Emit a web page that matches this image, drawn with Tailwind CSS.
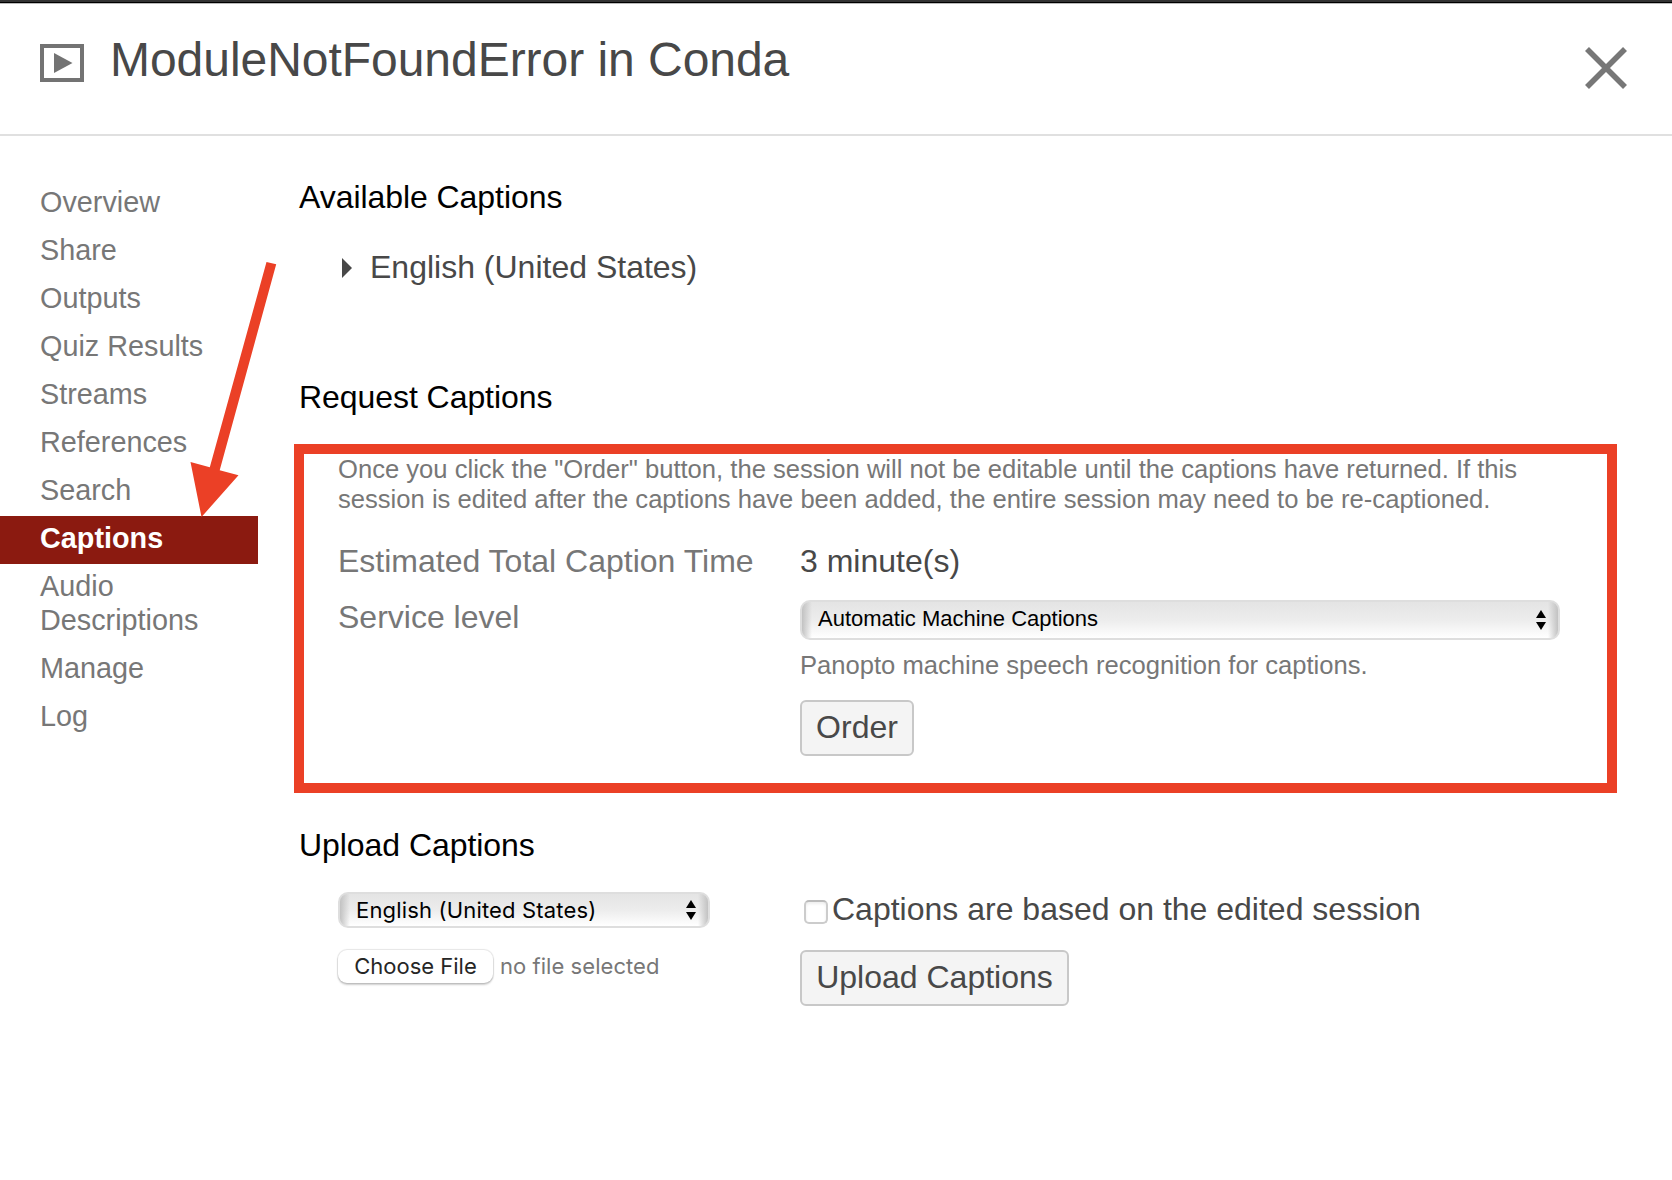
<!DOCTYPE html>
<html lang="en">
<head>
<meta charset="utf-8">
<title>ModuleNotFoundError in Conda</title>
<script src="https://cdn.jsdelivr.net/npm/@tailwindcss/browser@4"></script>
</head>
<body class="relative h-[1180px] w-[1672px] overflow-hidden bg-white font-['Liberation_Sans',Arial,sans-serif] text-[#484848]">
  <header class="flex h-[136px] items-start border-b-2 border-[#e0e0e0]">
    <svg class="ml-10 mt-11 shrink-0" width="44" height="38" viewBox="0 0 44 38"><rect x="2" y="2" width="40" height="34" fill="none" stroke="#737373" stroke-width="4"/><path d="M14 9v20l18.500-10z" fill="#737373"/></svg>
    <h1 class="ml-[26px] mt-8 whitespace-nowrap text-[48px] leading-[56px] tracking-[-0.04px]">ModuleNotFoundError in Conda</h1>
    <svg class="ml-auto mr-11 mt-[46px]" width="44" height="44" viewBox="0 0 44 44"><path d="M3 3l38 38M41 3L3 41" stroke="#777" stroke-width="5.600"/></svg>
  </header>
  <div class="flex">
    <nav class="mt-11 w-[258px] text-[28.8px] leading-[34px] text-[#777]">
      <a class="block pb-[9px] pl-10 pt-[5px]">Overview</a>
      <a class="block pb-[9px] pl-10 pt-[5px]">Share</a>
      <a class="block pb-[9px] pl-10 pt-[5px]">Outputs</a>
      <a class="block pb-[9px] pl-10 pt-[5px]">Quiz Results</a>
      <a class="block pb-[9px] pl-10 pt-[5px]">Streams</a>
      <a class="block pb-[9px] pl-10 pt-[5px]">References</a>
      <a class="block pb-[9px] pl-10 pt-[5px]">Search</a>
      <a class="block bg-[#8b1a10] pb-[9px] pl-10 pt-[5px] font-bold text-white">Captions</a>
      <a class="block pb-[9px] pl-10 pt-[5px]">Audio<br>Descriptions</a>
      <a class="block pb-[9px] pl-10 pt-[5px]">Manage</a>
      <a class="block pb-[9px] pl-10 pt-[5px]">Log</a>
    </nav>
    <main class="ml-9 w-[1323px] pt-[41px] text-[32px] leading-10">
      <h2 class="pl-[5px] tracking-[-0.06px] text-black">Available Captions</h2>
      <div class="mt-[30px] flex pl-12">
        <svg class="mt-[11px]" width="10" height="20" viewBox="0 0 10 20"><path d="M0 0l10 10L0 20z" fill="#484848"/></svg>
        <span class="ml-[18px]">English (United States)</span>
      </div>
      <h2 class="mt-[90px] pl-[5px] tracking-[-0.06px] text-black">Request Captions</h2>
      <section class="mt-[27px] h-[349px] border-[10px] border-[#eb4026] pl-[34px]">
        <p class="whitespace-nowrap text-[25.6px] leading-[30px] text-[#777]">Once you click the "Order" button, the session will not be editable until the captions have returned. If this<br>session is edited after the captions have been added, the entire session may need to be re-captioned.</p>
        <div class="mt-[27px] grid grid-cols-[462px_760px] gap-y-4">
          <div class="text-[#777]">Estimated Total Caption Time</div>
          <div>3 minute(s)</div>
          <div class="text-[#777]">Service level</div>
          <div class="pt-[3px]">
            <div class="flex h-10 items-center justify-between rounded-[10px] border-2 border-[#dedede] bg-[linear-gradient(to_right,#c2c2c2,#c2c2c200_10px,#c2c2c200_calc(100%-10px),#c2c2c2),linear-gradient(#e4e4e4,#ededed_52%,#fff)] pl-4 pr-3 text-[22px] leading-6 text-black">
              <span class="pb-0.5">Automatic Machine Captions</span>
              <svg width="10" height="20" viewBox="0 0 10 20"><path d="M5 0l5 8H0zM0 12h10l-5 8z"/></svg>
            </div>
            <p class="mt-2.5 text-[25.6px] leading-[30px] text-[#777]">Panopto machine speech recognition for captions.</p>
            <button class="mt-5 block h-14 w-[114px] rounded-md border-2 border-[#c8c8c8] bg-[#f4f4f4] pb-0.5">Order</button>
          </div>
        </div>
      </section>
      <h2 class="mt-8 pl-[5px] tracking-[-0.06px] text-black">Upload Captions</h2>
      <div class="mt-6 flex">
        <div class="ml-11 mt-[3px] w-[462px] font-['Inter',sans-serif] text-[22px] leading-7">
          <div class="flex h-9 w-[372px] items-center justify-between rounded-[10px] border-2 border-[#dedede] bg-[linear-gradient(to_right,#c2c2c2,#c2c2c200_10px,#c2c2c200_calc(100%-10px),#c2c2c2),linear-gradient(#e4e4e4,#ededed_52%,#fff)] pl-4 pr-3 text-black">
            <span class="tracking-[0.17px]">English (United States)</span>
            <svg width="10" height="20" viewBox="0 0 10 20"><path d="M5 0l5 8H0zM0 12h10l-5 8z"/></svg>
          </div>
          <div class="mt-[21px] flex h-[34px] items-center">
            <button class="h-[33px] w-[155px] rounded-[9px] bg-white text-[#262626] shadow-[0_0_1px_1px_#0000001a,0_2px_2px_#00000030]">Choose File</button>
            <span class="ml-[7px] tracking-[0.05px] text-[#777]">no file selected</span>
          </div>
        </div>
        <div>
          <label class="flex"><span class="ml-1 mt-[11px] h-6 w-6 rounded-[5px] border-2 border-[#ccc] border-t-[#bbb] bg-white shadow-[inset_0_2px_3px_#eee]"></span><span class="ml-1">Captions are based on the edited session</span></label>
          <button class="mt-[21px] block h-14 w-[269px] rounded-md border-2 border-[#c8c8c8] bg-[#f4f4f4] pb-0.5">Upload Captions</button>
        </div>
      </div>
    </main>
  </div>
  <div class="absolute inset-x-0 top-0 h-1 border-b border-[#bbb] bg-linear-to-b from-[#333] from-66% to-black to-66%"></div>
  <svg class="pointer-events-none absolute left-[180px] top-[255px]" width="105" height="270" viewBox="180 255 105 270"><path d="M266.500 262l9.700 2.300L219.700 470.300l18.800 5L201.500 517 190.500 462l19.300 5.200z" fill="#eb4026"/></svg>
</body>
</html>
